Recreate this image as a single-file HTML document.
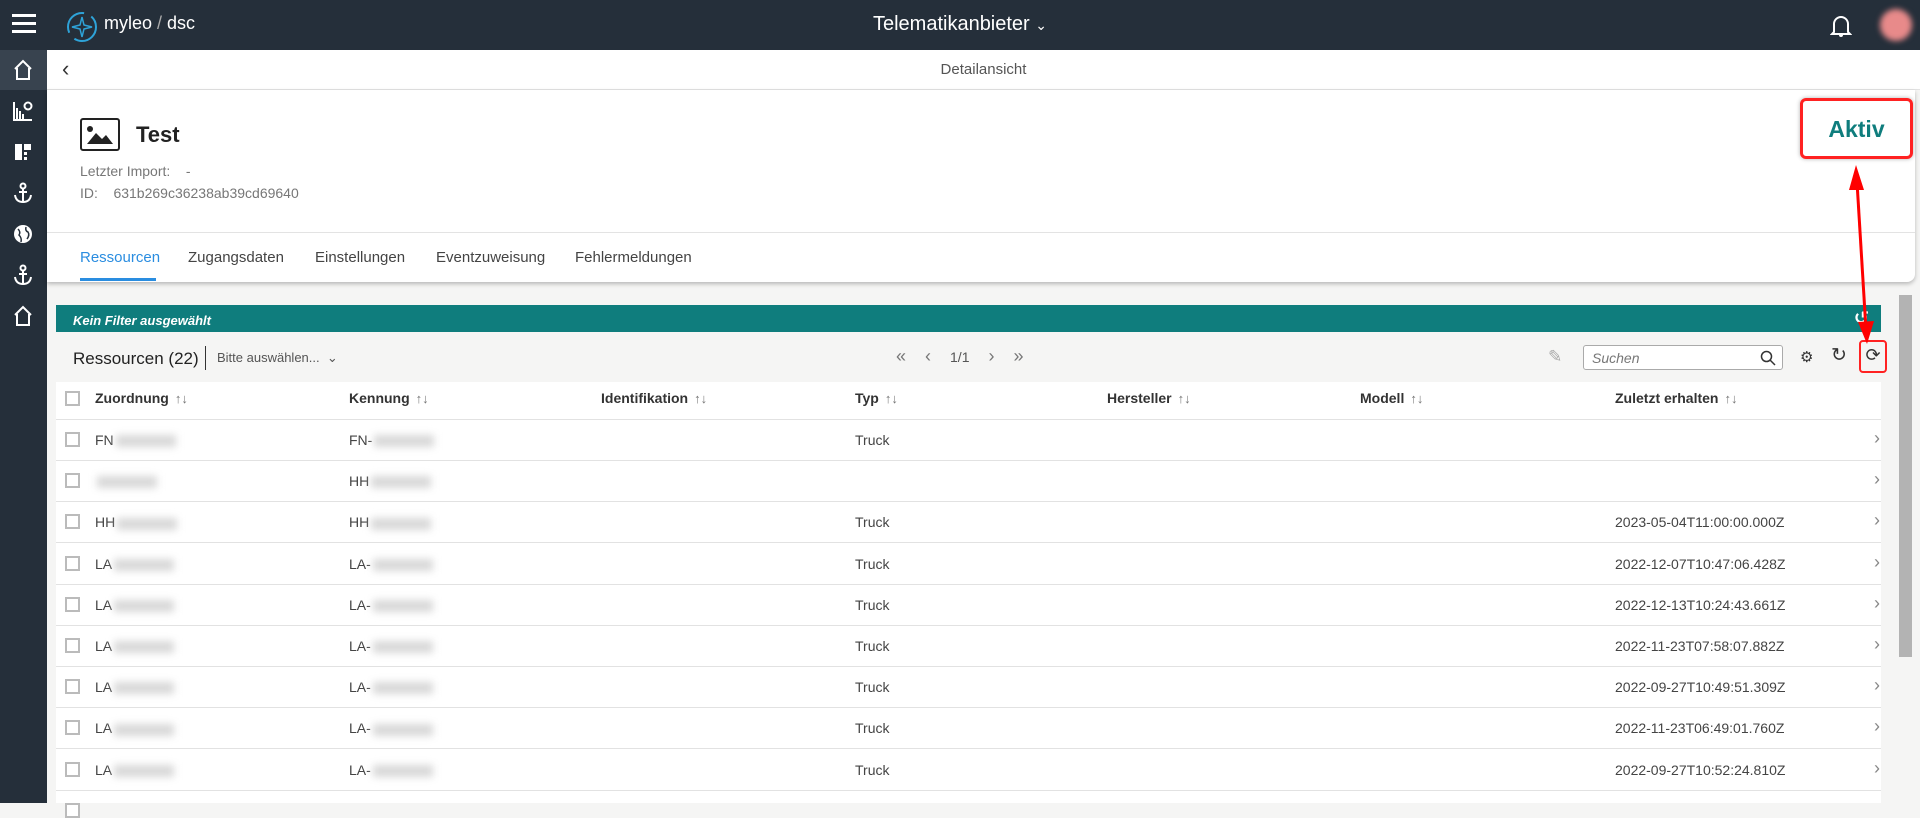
<!DOCTYPE html>
<html><head><meta charset="utf-8"><style>
*{box-sizing:border-box;margin:0;padding:0}
body{width:1920px;height:803px;overflow:hidden;background:#f5f5f4;font-family:"Liberation Sans",sans-serif;color:#333;position:relative}
.abs{position:absolute}
.top{left:0;top:0;width:1920px;height:50px;background:#252f3a;color:#fff}
.side{left:0;top:50px;width:47px;height:753px;background:#252f3a}
.side .act{position:absolute;left:0;top:0;width:47px;height:40px;background:#38434f}
.side svg{position:absolute;left:12px}
.sub{left:47px;top:50px;width:1873px;height:40px;background:#fff;border-bottom:1px solid #e3e3e3}
.card{left:47px;top:90px;width:1868px;height:192px;background:#fff;border-bottom-right-radius:8px;box-shadow:0 2px 4px rgba(0,0,0,.25)}
.tabs{left:47px;top:232px;width:1868px;border-top:1px solid #e3e3e3}
.tab{position:absolute;top:249px;font-size:15px;color:#444}
.teal{left:56px;top:305px;width:1825px;height:27px;background:#0f7d7d;color:#fff;font-style:italic;font-weight:bold;font-size:13px;padding:8px 0 0 17px}
.tbl{left:56px;top:382px;width:1825px;height:421px;background:#fff}
.hd{position:absolute;top:390px;font-size:14px;font-weight:bold;color:#333}
.cb{position:absolute;left:65px;width:15px;height:15px;border:2px solid #bbb;background:#fff}
.line{position:absolute;left:56px;width:1825px;height:1px;background:#e2e2e2}
.cell{position:absolute;font-size:14px;color:#444}
.blur{display:inline-block;width:60px;height:12px;background:#d8d8d8;filter:blur(4px);vertical-align:middle;margin-left:2px}
.chev{position:absolute;left:1874px;font-size:18px;color:#888}
.sort{color:#777;font-weight:normal;font-size:13px;margin-left:6px}
</style></head><body>
<div class="abs top">
  <div class="abs" style="left:12px;top:14px;width:24px;height:3px;background:#fff;box-shadow:0 8px 0 #fff,0 16px 0 #fff"></div>
  <svg class="abs" style="left:65px;top:10px" width="34" height="34" viewBox="0 0 34 34"><circle cx="17" cy="17" r="14" fill="none" stroke="#2ea3d8" stroke-width="2" stroke-dasharray="30 8"/><path d="M17 7L19 15 27 17 19 19 17 27 15 19 7 17 15 15Z" fill="none" stroke="#2ea3d8" stroke-width="1.5"/></svg>
  <div class="abs" style="left:104px;top:13px;font-size:18px">myleo <span style="color:#aaa">/</span> dsc</div>
  <div class="abs" style="left:0;width:1920px;top:13px;text-align:center;font-size:20px">Telematikanbieter <span style="font-size:14px">&#8964;</span></div>
  <svg class="abs" style="left:1830px;top:14px" width="22" height="24" viewBox="0 0 22 24"><path d="M4 18V10a7 7 0 0114 0v8l2 2H2z" fill="none" stroke="#fff" stroke-width="2"/><circle cx="11" cy="21" r="2" fill="#fff"/></svg>
  <div class="abs" style="left:1880px;top:9px;width:32px;height:32px;border-radius:50%;background:#e88a8a;filter:blur(3px)"></div>
</div>
<div class="abs side"><div class="act"></div>
  <svg style="top:9px" width="22" height="22" viewBox="0 0 22 22"><path d="M3 10L11 2 19 10M5 9V20H17V9" fill="none" stroke="#fff" stroke-width="2"/></svg>
  <svg style="top:50px" width="22" height="22" viewBox="0 0 22 22"><path d="M2 2V20H20" fill="none" stroke="#fff" stroke-width="2"/><path d="M5 8V19M8 11V19M11 14V19" stroke="#fff" stroke-width="2"/><circle cx="16" cy="6" r="3.5" fill="none" stroke="#fff" stroke-width="2"/></svg>
  <svg style="top:91px" width="22" height="22" viewBox="0 0 22 22"><path d="M3 3H10V19H3Z M12 3H19V9H12Z M12 11H15V14H12Z M12 16H15V19H12Z" fill="#fff"/></svg>
  <svg style="top:132px" width="22" height="22" viewBox="0 0 22 22"><circle cx="11" cy="4" r="2.5" fill="none" stroke="#fff" stroke-width="2"/><path d="M11 7V20M7 10H15M3 13Q4 20 11 20Q18 20 19 13" fill="none" stroke="#fff" stroke-width="2"/></svg>
  <svg style="top:173px" width="22" height="22" viewBox="0 0 22 22"><circle cx="11" cy="11" r="9" fill="#fff"/><path d="M6 6Q9 9 7 12Q10 15 9 19M14 4Q13 8 16 9Q18 12 15 16" fill="none" stroke="#252f3a" stroke-width="1.5"/></svg>
  <svg style="top:214px" width="22" height="22" viewBox="0 0 22 22"><circle cx="11" cy="4" r="2.5" fill="none" stroke="#fff" stroke-width="2"/><path d="M11 7V20M7 10H15M3 13Q4 20 11 20Q18 20 19 13" fill="none" stroke="#fff" stroke-width="2"/></svg>
  <svg style="top:255px" width="22" height="22" viewBox="0 0 22 22"><path d="M3 10L11 2 19 10M5 9V20H17V9" fill="none" stroke="#fff" stroke-width="2"/></svg>
</div>
<div class="abs sub"><div class="abs" style="left:15px;top:6px;font-size:22px;color:#333">‹</div><div style="text-align:center;padding-top:11px;font-size:15px;color:#555">Detailansicht</div></div>
<div class="abs card">
  <div class="abs" style="left:33px;top:28px;width:40px;height:33px;border:2.5px solid #222;border-radius:3px"><svg width="35" height="28" viewBox="0 0 35 28"><circle cx="8" cy="9" r="3" fill="#222"/><path d="M5 24L14 13 20 19 24 15 31 24Z" fill="#222"/></svg></div>
  <div class="abs" style="left:89px;top:32px;font-size:22px;font-weight:bold;color:#222">Test</div>
  <div class="abs" style="left:33px;top:73px;font-size:14px;color:#777">Letzter Import:&nbsp;&nbsp;&nbsp; -</div>
  <div class="abs" style="left:33px;top:95px;font-size:14px;color:#777">ID:&nbsp;&nbsp;&nbsp; 631b269c36238ab39cd69640</div>
  <div class="abs" style="left:1753px;top:8px;width:113px;height:61px;border:3px solid #f22;border-radius:6px;box-shadow:0 0 4px rgba(0,0,0,.3);text-align:center;padding-top:15px;font-size:23px;font-weight:bold;color:#0f7d7d">Aktiv</div>
</div>
<div class="abs tabs"></div>
<div class="tab" style="left:80px;color:#2a8de0">Ressourcen</div>
<div class="abs" style="left:80px;top:278px;width:76px;height:3px;background:#2a8de0"></div>
<div class="tab" style="left:188px">Zugangsdaten</div>
<div class="tab" style="left:315px">Einstellungen</div>
<div class="tab" style="left:436px">Eventzuweisung</div>
<div class="tab" style="left:575px">Fehlermeldungen</div>
<div class="abs teal">Kein Filter ausgewählt<span class="abs" style="right:12px;top:3px;font-style:normal;font-size:18px">↺</span></div>
<div class="abs" style="left:1899px;top:295px;width:13px;height:362px;background:#b3b3b3"></div>
<div class="abs" style="left:73px;top:349px;font-size:17px;color:#222">Ressourcen (22)</div>
<div class="abs" style="left:205px;top:346px;width:1px;height:24px;background:#333"></div>
<div class="abs" style="left:217px;top:350px;font-size:13px;color:#555">Bitte auswählen... &nbsp;&#8964;</div>
<div class="abs" style="left:896px;top:346px;font-size:18px;color:#777;word-spacing:14px">« ‹ <span style="font-size:14px;color:#555">1/1</span> › »</div>
<div class="abs" style="left:1548px;top:347px;font-size:17px;color:#aaa">✎</div>
<div class="abs" style="left:1583px;top:345px;width:200px;height:25px;border:1px solid #aaa;border-radius:3px;background:#fff;font-style:italic;font-size:14px;color:#777;padding:4px 8px">Suchen<svg class="abs" style="right:6px;top:4px" width="16" height="16" viewBox="0 0 16 16"><circle cx="6.5" cy="6.5" r="5" fill="none" stroke="#333" stroke-width="1.5"/><path d="M10 10l5 5" stroke="#333" stroke-width="1.5"/></svg></div>
<div class="abs" style="left:1800px;top:348px;font-size:15px;color:#333">⚙</div>
<div class="abs" style="left:1831px;top:344px;font-size:19px;color:#333">↻</div>
<div class="abs" style="left:1859px;top:340px;width:28px;height:33px;border:2.5px solid #f22;border-radius:4px;text-align:center;font-size:18px;padding-top:3px">⟳</div>
<svg class="abs" style="left:0;top:0" width="1920" height="803"><path d="M1857 182L1866 330" stroke="#f00" stroke-width="3"/><path d="M1849 190L1856 165 1864 190Z M1858 322L1867 344 1874 321Z" fill="#f00"/></svg>
<div class="abs tbl"></div>
<div class="cb" style="top:391px"></div>
<div class="hd" style="left:95px">Zuordnung<span class="sort">↑↓</span></div>
<div class="hd" style="left:349px">Kennung<span class="sort">↑↓</span></div>
<div class="hd" style="left:601px">Identifikation<span class="sort">↑↓</span></div>
<div class="hd" style="left:855px">Typ<span class="sort">↑↓</span></div>
<div class="hd" style="left:1107px">Hersteller<span class="sort">↑↓</span></div>
<div class="hd" style="left:1360px">Modell<span class="sort">↑↓</span></div>
<div class="hd" style="left:1615px">Zuletzt erhalten<span class="sort">↑↓</span></div>
<div class="line" style="top:419px"></div>
<div id="rows"></div>
<script>
var d=[["FN","FN-","Truck",""],["","HH","",""],["HH","HH","Truck","2023-05-04T11:00:00.000Z"],["LA","LA-","Truck","2022-12-07T10:47:06.428Z"],["LA","LA-","Truck","2022-12-13T10:24:43.661Z"],["LA","LA-","Truck","2022-11-23T07:58:07.882Z"],["LA","LA-","Truck","2022-09-27T10:49:51.309Z"],["LA","LA-","Truck","2022-11-23T06:49:01.760Z"],["LA","LA-","Truck","2022-09-27T10:52:24.810Z"],["","","",""]];
var h="";for(var i=0;i<d.length;i++){var y=419+i*41.2,t=y+13;
h+='<div class="cb" style="top:'+(t)+'px"></div>';
if(i<9){h+='<div class="cell" style="left:95px;top:'+t+'px">'+d[i][0]+'<span class="blur"></span></div><div class="cell" style="left:349px;top:'+t+'px">'+d[i][1]+'<span class="blur"></span></div><div class="cell" style="left:855px;top:'+t+'px">'+d[i][2]+'</div><div class="cell" style="left:1615px;top:'+t+'px">'+d[i][3]+'</div><div class="chev" style="top:'+(t-4)+'px">›</div>';
h+='<div class="line" style="top:'+(y+41)+'px"></div>';}}
document.getElementById("rows").innerHTML=h;
</script>
</body></html>
